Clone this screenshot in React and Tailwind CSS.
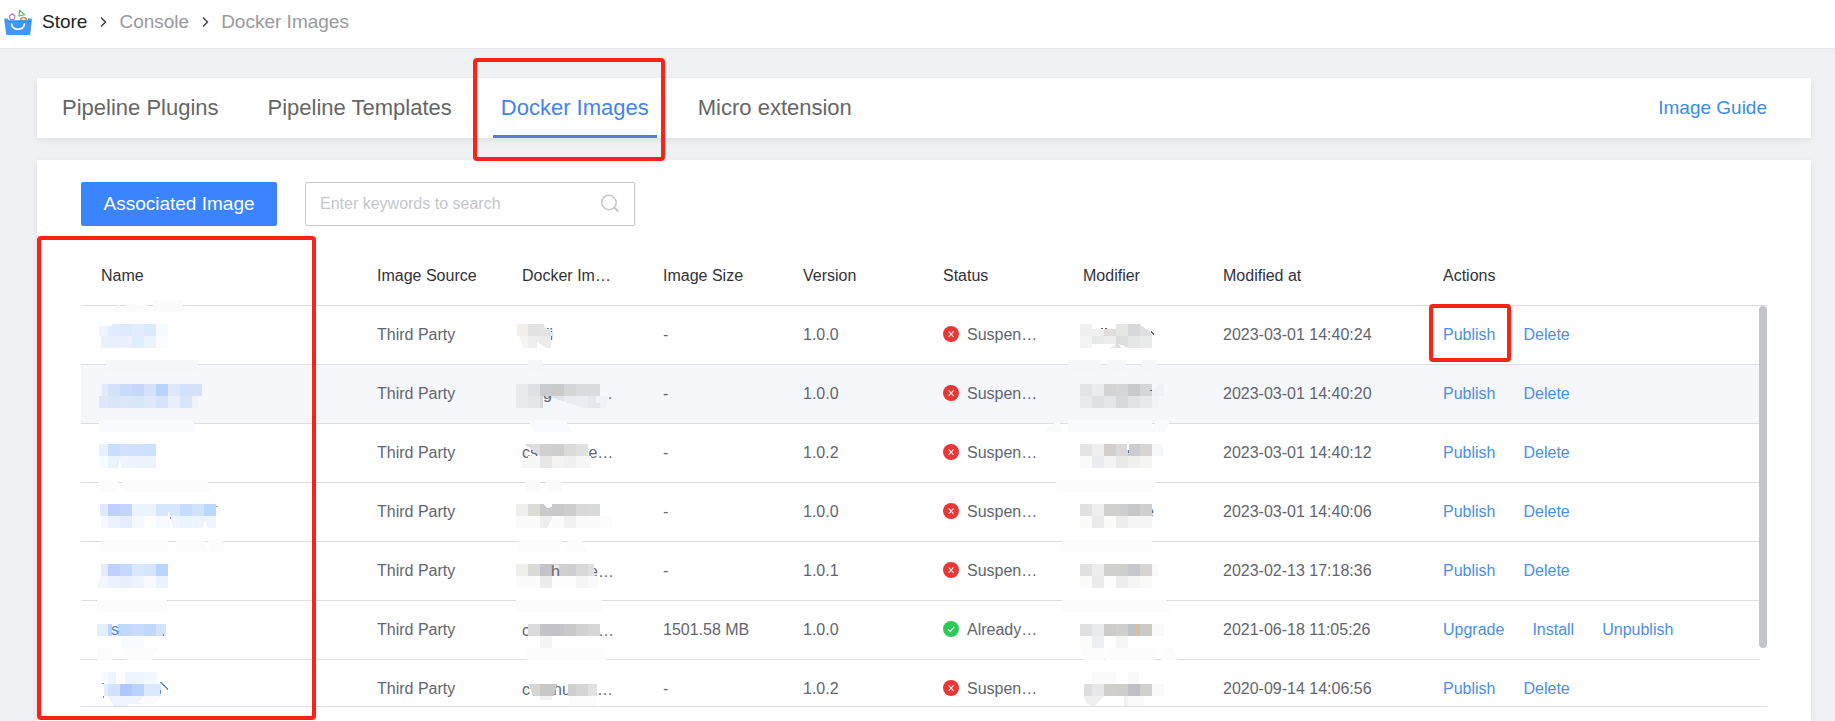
import React from "react";

const GRID = 12;

// One line of 12px blocks, cut off at x0 and x1.
function strip(y, x0, x1, colors) {
  const start = Math.floor(x0 / GRID) * GRID;
  return colors
    .split(" ")
    .map((c, i) => {
      const left = Math.max(start + i * GRID, x0);
      const right = Math.min(start + (i + 1) * GRID, x1);
      return { kind: "rect", x: left, y, w: right - left, h: GRID, fill: "#" + c };
    })
    .filter((r) => r.w > 0);
}
const block = (x, y, w, h, fill) => [{ kind: "rect", x, y, w, h, fill }];
const poly = (points, fill) => [{ kind: "poly", points, fill }];
const word = (x, y, text, fill = "#63656e") => [{ kind: "text", x, y, text, fill }];

const ROW_TOP = 306;
const ROW_HEIGHT = 59;

function Mosaic({ x, row, items }) {
  return (
    <svg
      aria-hidden="true"
      className="pointer-events-none absolute left-0 top-0 h-[59px] w-[140px] overflow-visible"
      viewBox={`${x} ${ROW_TOP + row * ROW_HEIGHT} 140 59`}
      shapeRendering="crispEdges"
    >
      {items.flat().map((s, i) => {
        if (s.kind === "rect") return <rect key={i} x={s.x} y={s.y} width={s.w} height={s.h} fill={s.fill} />;
        if (s.kind === "poly") return <polygon key={i} points={s.points} fill={s.fill} />;
        return (
          <text key={i} x={s.x} y={s.y} fontSize="16" fill={s.fill}>
            {s.text}
          </text>
        );
      })}
    </svg>
  );
}

const NAMES = [
  [
    poly("154,300 181,300 186,312 154,312", "#fbfbfc"),
    poly("113,312 118,305 124,307 127,304 147,305 147,312", "#fbfbfc"),
    strip(324, 99, 168, "eff4fe dfebfe dde9fe e3ebfe dbe9fe f5faff"),
    strip(336, 101, 168, "e9f1fe e9effe ebf0fe dfeeff ebf3ff fafcff"),
    block(99, 324, 13, 2, "#ffffff"),
  ],
  [
    poly("105,360 198,360 198,372 107,372", "#f5f6f8"),
    strip(384, 102, 202, "e4ebf8 d3e2fa c9dafa c6d8f9 d3e2fa b8d3fc dfe7fa d3e2fa d3e2fa"),
    strip(396, 99, 198, "dfe7f8 d9e5f9 dde7fa d7e6f9 dfe8fa d5e4f9 e9eefb d9e6fa eef2fc"),
  ],
  [
    poly("99,420 193,420 196,432 99,432", "#f8fafd"),
    strip(444, 99, 156, "e8f1ff cbddff d3e1fe d1e0fe cde0ff"),
    strip(456, 99, 156, "f8fbff ebf3ff eff4ff eef4ff ebf3fe"),
    poly("118,468 120,457 121,468", "#ffffff"),
  ],
  [
    block(99, 480, 19, 12, "#fcfcfc"),
    poly("123,480 207,480 211,492 125,492", "#fcfcfc"),
    strip(504, 100, 216, "dfe8fd bfd0fe c3d5fe ebf3ff ebf3ff d7e6ff d7e6ff c7dbff cfe3ff bbd7ff"),
    strip(516, 101, 216, "f3f7ff ebf1ff e7edfe f5f9ff ffffff f7faff f0f5ff ebf3ff eef4ff eef4ff"),
    poly("168,512 169,512 173,528 169,528", "#ffffff"),
    poly("205,520 208,528 203,528", "#ffffff"),
    block(216, 506, 1, 1, "#5a8fdc"),
    block(170, 517, 1, 2, "#a99ac0"),
  ],
  [
    block(101, 540, 67, 12, "#fcfcfc"),
    poly("176,540 205,540 208,552 176,552", "#fcfcfc"),
    poly("208,540 223,540 225,552 210,552", "#fcfcfc"),
    strip(564, 101, 168, "e3ebfd bfd0fe c5d8fe d9e8ff d3e5ff b7d5ff"),
    strip(576, 97, 168, "f3f6fe ebf1fe e7effe eef4ff f9faff ebf2ff"),
    poly("97,576 101,576 97,586", "#ffffff"),
  ],
  [
    block(97, 600, 70, 12, "#fcfcfc"),
    strip(624, 97, 166, "e3eeff bdd6ff c1d9ff c9dcff c1d9ff d3e4ff"),
    block(112, 624, 6, 12, "#f3f8ff"),
    word(111, 635, "s", "#4a86dc"),
    strip(636, 122, 144, "f9fcff f7fbff"),
    block(163, 634, 1, 2, "#5a8fdc"),
  ],
  [
    block(97, 648, 15, 12, "#fcfcfc"),
    poly("126,648 158,648 153,660 126,660", "#fcfcfc"),
    strip(672, 101, 116, "f7faff eef5ff"),
    strip(672, 125, 158, "eef5ff eef5ff f3f8ff f7faff"),
    strip(684, 104, 161, "e3edff d3e2fe adc9ff b9d3ff dbe8fe dbe8fe"),
    poly("108,696 161,696 154,704 130,704 124,707 114,707", "#eef3fe"),
    poly("144,696 161,696 154,705 138,703", "#fbfbfc"),
    poly("159,682 161,682 168,689 167,690", "#5a8fdc"),
    block(102, 683, 2, 1, "#5a8fdc"),
    block(103, 696, 1, 2, "#5a8fdc"),
    block(160, 690, 1, 4, "#5a8fdc"),
  ],
];

const DOCKER = [
  [
    word(546, 340, "ii"),
    strip(324, 517, 544, "f3efed e2e2e3 e3e3e3"),
    poly("540,324 552,332 552,336 540,336", "#e3e3e3"),
    strip(336, 519, 551, "f6f5f4 eeeeee ebebeb"),
    poly("517,336 519,336 523,348 517,348", "#ffffff"),
    poly("537,342 546,348 537,348", "#ffffff"),
  ],
  [
    poly("527,360 543,360 543,372 530,372", "#f5f6f8"),
    strip(396, 516, 607, "e9eaed e5e6e9 d9dadd e3e4e8 e9ebf0 ebedf1 e5e7ec f0f2f7"),
    poly("543,396 553,398 583,408 543,408", "#f5f7fb"),
    word(543, 399, "g"),
    word(597, 399, "…"),
    strip(384, 516, 608, "e9eaec dfe0e2 cacbce cacacb d3d5d7 d9dbde d9dbde f5f7fb"),
    block(596, 396, 12, 7, "#f0f2f7"),
  ],
  [
    poly("529,420 565,420 573,432 532,432", "#f8fafd"),
    word(522, 458, "cs"),
    word(584, 458, "te…"),
    poly("524,444 540,444 540,456", "#dededf"),
    strip(444, 540, 588, "d0d0d1 cfcfcf dbdbd9 e1e1e1"),
    strip(456, 528, 591, "f7f7f6 e7e7e8 f5f3f1 f0f0f0 f6f6f6 f8f8f8"),
    poly("521,468 523,460 528,459 528,468", "#f7f7f7"),
  ],
  [
    poly("524,480 540,480 541,492 527,492", "#fbfbfb"),
    poly("546,480 560,480 563,492 548,492", "#fbfbfb"),
    strip(504, 516, 600, "efefed dbdcd8 c9c9cb c9c9cb cdcdcd d9d9d9 d9dadc"),
    strip(516, 516, 612, "fafafa fafafa efefef fbfbfb f1f1f1 fafafa fbfbfb fcfcfc"),
    poly("543,504 552,504 552,507 547,508", "#ffffff"),
    poly("547,528 552,519 552,528", "#ffffff"),
  ],
  [
    poly("519,540 563,540 559,552 518,552", "#fcfcfc"),
    poly("567,540 581,540 589,552 567,552", "#fcfcfc"),
    word(589, 577, "e…"),
    strip(564, 516, 594, "efefec dadbd8 c3c4ca d3cfcd d0cfcf d9d9da e0e0e0"),
    block(552, 565, 7, 12, "#ededed"),
    word(551, 577, "h"),
    strip(576, 516, 599, "fbfbfb fbfbfb ececec fdfdfd fdfdfd f5f5f5 fafafa"),
  ],
  [
    block(516, 600, 86, 12, "#fcfcfc"),
    word(522, 636, "c"),
    word(598, 636, "…"),
    strip(624, 528, 600, "dbdbdc c3c3c8 c3c3c8 c9c9ca d1d1d1 d7d7d7"),
    block(540, 636, 12, 12, "#f4f4f4"),
  ],
  [
    poly("527,648 604,648 606,660 527,660", "#fcfcfc"),
    word(522, 695, "c"),
    word(553, 695, "nu"),
    word(597, 695, "…"),
    poly("529,684 557,684 554,696 533,696", "#d5d5d2"),
    poly("540,684 557,684 554,696 540,696", "#c7c7c8"),
    strip(684, 568, 597, "cfcfcf d5d5d5 e1e1e1"),
    block(540, 696, 12, 4, "#f2f2f2"),
    block(569, 696, 27, 12, "#fcfcfc"),
  ],
];

const MODIFIERS = [
  [
    strip(324, 1080, 1092, "f0f0f0"),
    block(1092, 329, 12, 7, "#f0f0f0"),
    block(1104, 329, 12, 7, "#dfdcda"),
    strip(324, 1116, 1140, "e6e6e5 d7d8da"),
    poly("1140,325 1151,332 1152,336 1140,336", "#dfdfe1"),
    block(1101, 328, 2, 1, "#63656e"),
    block(1105, 328, 2, 1, "#63656e"),
    strip(336, 1080, 1153, "f3f3f3 e7e8e8 eeeded dcdedd e7e6e7 e9eaea"),
    poly("1092,344 1116,344 1109,348 1092,348", "#ffffff"),
    poly("1119,344 1129,348 1121,348", "#ffffff"),
    poly("1150,332 1152,331 1154,334 1153,335", "#63656e"),
  ],
  [
    block(1068, 360, 33, 12, "#f5f6f8"),
    block(1107, 360, 19, 12, "#f5f6f8"),
    block(1142, 360, 15, 12, "#f5f6f8"),
    strip(384, 1080, 1164, "e3e4e6 ebecee d3d3d4 d5d6d8 c8cacd d5d6d9 eff1f6"),
    strip(396, 1080, 1159, "e9eaed dfe1e5 e5e6e9 d7dadc e1e3e6 e6e8ec f2f4f8"),
    poly("1152,384 1160,384 1152,391", "#f5f7fb"),
    block(1150, 390, 2, 1, "#63656e"),
  ],
  [
    poly("1055,423 1060,423 1062,432 1046,432 1048,427", "#f9fafc"),
    block(1068, 420, 84, 12, "#f9fafc"),
    poly("1156,420 1170,420 1166,432 1152,432", "#f9fafc"),
    strip(444, 1080, 1163, "e5e5e5 efefef d3cfcd d9d9d9 cbccd0 d7d6d5 f7f8fa"),
    strip(456, 1080, 1152, "fafafa ebecef f4f4f4 e9e9e9 f0f0ef f5f5f4"),
    block(1127, 444, 2, 6, "#ffffff"),
    block(1128, 450, 1, 3, "#5b6f8f"),
  ],
  [
    poly("1055,480 1155,480 1153,492 1058,492", "#fcfcfc"),
    word(1145, 517, "e"),
    strip(504, 1080, 1152, "e1e1e2 efeff0 d0d0ce cfcfcf c6c7c9 cfcfcf"),
    strip(516, 1080, 1152, "fbfbf9 ebebec fbfbfa ededee f5f5f6 f5f5f6"),
  ],
  [
    block(1062, 540, 90, 12, "#fcfcfc"),
    strip(564, 1080, 1152, "e1e1e1 ededee d0d0ce cfcfce c6c7cb d5d4d3"),
    poly("1152,564 1156,564 1159,576 1152,576", "#f9f9f9"),
    strip(576, 1080, 1152, "fbfbfa ebebec fdfdfd ededee f5f5f6 fafaf9"),
  ],
  [
    poly("1062,600 1167,600 1170,612 1062,612", "#fcfcfc"),
    strip(624, 1080, 1164, "e1e1e1 eaebec cdccca cfcfce c0c3c6 cdc9c4 f9f9fa"),
    block(1136, 624, 1, 12, "#e3c08a"),
    strip(636, 1080, 1128, "fcfcfb edeff1 fefefe f6f6f7"),
  ],
  [
    poly("1081,648 1104,648 1104,660 1083,660", "#fcfcfc"),
    block(1106, 648, 49, 12, "#fcfcfc"),
    poly("1162,648 1174,648 1177,660 1162,660", "#fcfcfc"),
    strip(672, 1092, 1116, "fafafa fafafa"),
    strip(672, 1128, 1139, "f9f9fa"),
    word(1145, 695, "e"),
    strip(684, 1084, 1152, "dedede e7e7e9 cfcecb cdcdcc c0c0c4 d0d0ce"),
    strip(684, 1152, 1164, "f9f9fa"),
    poly("1084,696 1104,696 1094,707 1086,703", "#efeff0"),
    block(1124, 696, 4, 12, "#f1f1f1"),
    block(1128, 696, 16, 12, "#fafafa"),
  ],
];

const ROWS = [
  { size: "-", version: "1.0.0", at: "2023-03-01 14:40:24" },
  { size: "-", version: "1.0.0", at: "2023-03-01 14:40:20" },
  { size: "-", version: "1.0.2", at: "2023-03-01 14:40:12" },
  { size: "-", version: "1.0.0", at: "2023-03-01 14:40:06" },
  { size: "-", version: "1.0.1", at: "2023-02-13 17:18:36" },
  { size: "1501.58 MB", version: "1.0.0", at: "2021-06-18 11:05:26", released: true },
  { size: "-", version: "1.0.2", at: "2020-09-14 14:06:56" },
];

const HEADINGS = [
  ["Name", "w-[276px]"],
  ["Image Source", "w-[145px]"],
  ["Docker Im…", "w-[141px]"],
  ["Image Size", "w-[140px]"],
  ["Version", "w-[140px]"],
  ["Status", "w-[140px]"],
  ["Modifier", "w-[140px]"],
  ["Modified at", "w-[220px]"],
  ["Actions", "w-auto"],
];

const TABS = ["Pipeline Plugins", "Pipeline Templates", "Docker Images", "Micro extension"];

function Logo() {
  return (
    <svg className="h-7 w-7 shrink-0" viewBox="0 0 28 28" fill="none" aria-hidden="true">
      <path d="M8.2 5.8l2.8 2-1 3.6-3.8.2L5.400 8.200z" stroke="#a57be0" strokeWidth="1.2" />
      <path d="M15.600 2.200l5 4.400-5.600 1.400z" stroke="#5fb868" strokeWidth="1.2" strokeLinejoin="round" />
      <path d="M16.600 12.500c0-4 5.800-4 6 0z" stroke="#e8835a" strokeWidth="1.4" />
      <path d="M1 10.600h2.600l1 1.600h18.800l1-1.600H27c.6 0 1 .5.9 1l-1.600 14.600c-.1.500-.5.800-1 .800H3.200c-.5 0-.9-.3-1-.8L.2 11.600c-.1-.5.2-1 .8-1z" fill="#4298f7" />
      <path d="M1 13.400h26" stroke="#3484e6" strokeWidth=".8" />
      <path d="M7.500 16c1.300 7 11.700 7 13 0" stroke="#fff" strokeWidth="1.5" strokeLinecap="round" />
    </svg>
  );
}

function Chevron() {
  return (
    <svg className="h-3 w-2" viewBox="0 0 8 12" fill="none" aria-hidden="true">
      <path d="M2 1.500L6.500 6 2 10.500" stroke="#3c3c44" strokeWidth="1.4" />
    </svg>
  );
}

function StatusIcon({ released }) {
  return (
    <svg className="mb-0.5 h-4 w-4 shrink-0" viewBox="0 0 16 16" fill="none" aria-hidden="true">
      <circle cx="8" cy="8" r="8" fill={released ? "#2dca56" : "#ea3636"} />
      <path
        d={released ? "M5 8.200l2.200 2.200L11.200 6" : "M5.600 5.300l5 5.600M10.600 5.300l-5 5.600"}
        stroke="#fff"
        strokeOpacity=".9"
        strokeWidth="1.2"
      />
    </svg>
  );
}

const MARK = "pointer-events-none absolute z-10 rounded-sm border-4 border-[#fa2316]";
const CELL = "h-[59px] border-b border-[#dcdee2] px-5";

export default function App() {
  return (
    <div className="flex min-h-screen flex-col bg-[#f0f1f3] font-['Liberation_Sans',Arial,sans-serif] text-base text-[#63656e]">
      <header className="h-12 bg-white pb-1 pl-1 shadow-[0_1px_1px_rgba(0,0,0,0.04)]">
        <nav aria-label="Breadcrumb" className="flex h-full items-center text-[19px] text-[#99999d]">
          <a href="#store" className="flex items-center gap-2.5 text-[#222222]">
            <Logo />
            Store
          </a>
          <span className="px-3">
            <Chevron />
          </span>
          <a href="#console">Console</a>
          <span className="px-3">
            <Chevron />
          </span>
          <span>Docker Images</span>
        </nav>
      </header>

      <main className="flex flex-1 flex-col gap-[22px] pl-[37px] pr-6 pt-[30px]">
        <div className="flex h-[60px] items-stretch justify-between bg-white pl-[17px] pr-11 shadow-[0_2px_6px_rgba(51,60,72,0.1)]">
          <nav aria-label="Store sections" className="flex gap-[33px] text-[22px]">
            {TABS.map((tab) => {
              const active = tab === "Docker Images";
              return (
                <a
                  key={tab}
                  href="#tab"
                  aria-current={active ? "page" : undefined}
                  className={
                    active
                      ? "relative flex items-center border-b-3 border-[#4483ee] px-2 pt-px text-[#4483ee]"
                      : "flex items-center px-2 pb-0.5 text-[#666666]"
                  }
                >
                  {tab}
                  {active && <span className={`${MARK} -bottom-[26px] -left-5 -right-2 -top-5`} />}
                </a>
              );
            })}
          </nav>
          <a href="#guide" className="flex items-center text-[19px] text-[#3c8ce7]">
            Image Guide
          </a>
        </div>

        <section className="relative flex-1 bg-white px-11 pb-3.5 pt-[22px] shadow-[0_2px_6px_rgba(51,60,72,0.1)]">
          <span className={`${MARK} bottom-px left-0 top-[76px] w-[279px]`} />

          <div className="flex gap-7">
            <button type="button" className="h-11 w-49 rounded-xs bg-[#3a84ff] text-[19px] text-white">
              Associated Image
            </button>
            <div className="relative w-[330px]">
              <input
                type="text"
                aria-label="Enter keywords to search"
                placeholder="Enter keywords to search"
                className="h-11 w-full rounded-xs border border-[#c4c6cc] bg-white pl-3.5 pr-10 text-base outline-none placeholder:text-[#c4c6cc]"
              />
              <svg className="pointer-events-none absolute right-4 top-3 h-[18px] w-[18px]" viewBox="0 0 18 18" fill="none" aria-hidden="true">
                <circle cx="8" cy="8.5" r="7.2" stroke="#c4c6cc" strokeWidth="1.5" />
                <path d="M13.300 13.700l4 3.600" stroke="#c4c6cc" strokeWidth="2" />
              </svg>
            </div>
          </div>

          <div className="relative mt-5 h-[461px] overflow-hidden border-b border-[#dcdee2]">
            <table className="w-full table-fixed border-separate border-spacing-0 text-left">
              <thead>
                <tr>
                  {HEADINGS.map(([label, width]) => (
                    <th key={label} scope="col" className={`${width} h-[60px] border-b border-[#dcdee2] px-5 font-normal text-[#313238]`}>
                      {label}
                    </th>
                  ))}
                </tr>
              </thead>
              <tbody>
                {ROWS.map((row, i) => (
                  <tr key={row.at} className={i === 1 ? "bg-[#f5f7fb]" : ""}>
                    <td className={`${CELL} relative`}>
                      <Mosaic x={81} row={i} items={NAMES[i]} />
                    </td>
                    <td className={CELL}>Third Party</td>
                    <td className={`${CELL} relative`}>
                      <Mosaic x={502} row={i} items={DOCKER[i]} />
                    </td>
                    <td className={CELL}>{row.size}</td>
                    <td className={CELL}>{row.version}</td>
                    <td className={CELL}>
                      <span className="flex items-center gap-2">
                        <StatusIcon released={row.released} />
                        {row.released ? "Already…" : "Suspen…"}
                      </span>
                    </td>
                    <td className={`${CELL} relative`}>
                      <Mosaic x={1063} row={i} items={MODIFIERS[i]} />
                    </td>
                    <td className={`${CELL} whitespace-nowrap`}>{row.at}</td>
                    <td className={`${CELL} relative`}>
                      <span className="flex gap-7 text-[#4b8fe8]">
                        {(row.released ? ["Upgrade", "Install", "Unpublish"] : ["Publish", "Delete"]).map((a) => (
                          <button key={a} type="button">
                            {a}
                          </button>
                        ))}
                      </span>
                      {i === 0 && <span className={`${MARK} -top-0.5 left-1.5 h-[58px] w-[82px]`} />}
                    </td>
                  </tr>
                ))}
              </tbody>
            </table>
            <div className="absolute bottom-0 right-0 top-[60px] w-2 bg-white">
              <div className="h-[342px] rounded-full bg-[#c4c5cc]" />
            </div>
          </div>
        </section>
      </main>
    </div>
  );
}
